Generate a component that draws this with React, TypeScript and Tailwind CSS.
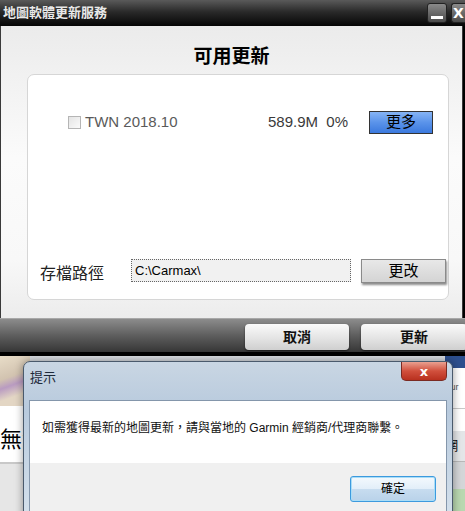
import React from "react";

const cjk = "font-['Liberation_Sans','Noto_Sans_CJK_TC',sans-serif]";

function BackgroundStrip() {
  return (
    <div className="flex h-[155px] w-full bg-[#d9dde2]">
      <div className="flex w-[30px] flex-col">
        <div className="h-[50px] bg-[linear-gradient(160deg,#e8ddc8_0%,#d2c3b0_40%,#b99bc1_55%,#e3d6c4_75%)]" />
        <div className={`flex h-[56px] items-center overflow-hidden whitespace-nowrap bg-white pt-[10px] text-[22px] text-black ${cjk}`}>無法</div>
        <div className="h-[2px] bg-[#c8c8c8]" />
        <div className="flex-1 bg-[#e6e6e6]" />
      </div>
      <div className="flex-1" />
      <div className="flex w-[20px] flex-col">
        <div className="h-[12px] bg-[#2d4f8e]" />
        <div className="flex h-[40px] items-center bg-white text-[9px] text-[#555] font-['Liberation_Sans',sans-serif]">Fur</div>
        <div className="h-[1px] bg-[#c8c8c8]" />
        <div className="h-[22px] bg-white" />
        <div className={`flex h-[30px] items-center overflow-hidden whitespace-nowrap bg-[#e4e6e8] text-[13px] ${cjk}`}>網</div>
        <div className="h-[1px] bg-[#b8b8b8]" />
        <div className="flex-1 bg-[#d4d6d8]" />
        <div className="h-[22px] bg-[#b9d8b0]" />
      </div>
    </div>
  );
}

function Dialog() {
  return (
    <div className="absolute left-[23px] top-[361px] flex h-[160px] w-[430px] flex-col rounded-t-[7px] border border-[#4a5a6c] bg-[linear-gradient(180deg,#c9d6e3_0%,#b8cadd_30%,#d5e1ec_100%)] px-[5px] shadow-[0_0_8px_rgba(0,0,0,0.4)]">
      <div className="flex h-[38px] items-start justify-between">
        <span className={`mt-[6px] pl-[1px] text-[13px] text-[#1e2a3a] ${cjk}`}>提示</span>
        <div className="flex h-[19px] w-[46px] items-center justify-center rounded-b-[5px] border border-t-0 border-[#7a2a22] bg-[linear-gradient(180deg,#e9a090_0%,#d1503d_50%,#b8301f_100%)] text-[13px] font-bold leading-none text-white font-['DejaVu_Sans',sans-serif]">
          x
        </div>
      </div>
      <div className="flex flex-1 flex-col border border-[#8496ab] bg-white">
        <div className={`flex h-[62px] items-start pl-[12px] pt-[18px] text-[12px] text-[#111] ${cjk}`}>
          如需獲得最新的地圖更新，請與當地的 Garmin 經銷商/代理商聯繫。
        </div>
        <div className="flex flex-1 justify-end bg-[#f0f0f0] pr-[10px] pt-[13px]">
          <div className={`flex h-[26px] w-[86px] items-center justify-center rounded-[3px] border border-[#3c9ade] bg-[linear-gradient(180deg,#f4f9fd_0%,#e2eef9_50%,#c7dcef_51%,#b9d2e9_100%)] shadow-[inset_0_0_0_1px_#a9ddf7] text-[12px] text-black ${cjk}`}>
            確定
          </div>
        </div>
      </div>
    </div>
  );
}

export default function App() {
  return (
    <div className="relative h-[511px] w-[465px] overflow-hidden bg-black">
      <div className="flex h-[356px] w-full flex-col bg-black">
        <div className="flex h-[26px] items-center justify-between bg-[linear-gradient(180deg,#5a5a5a_0%,#2a2a2a_45%,#050505_100%)] pl-[3px]">
          <span className={`text-[13px] font-bold text-[#e8e8e8] ${cjk}`}>地圖軟體更新服務</span>
          <div className="flex gap-[4px] self-start pt-[3px]">
            <div className="flex h-[20px] w-[20px] items-end justify-center rounded-[3px] border border-[#222] bg-[linear-gradient(180deg,#8a8a8a_0%,#4a4a4a_100%)] pb-[3px]">
              <div className="h-[3px] w-[12px] bg-white" />
            </div>
            <div className="flex h-[20px] w-[14px] items-center justify-start overflow-hidden rounded-l-[3px] border border-r-0 border-[#222] bg-[linear-gradient(180deg,#8a8a8a_0%,#4a4a4a_100%)] pl-[1px] text-[14px] font-bold leading-none text-white font-['DejaVu_Sans',sans-serif]">
              X
            </div>
          </div>
        </div>
        <div className="flex h-[292px] w-[463px] flex-col border-l border-r border-[#3a3a3a] bg-[linear-gradient(180deg,#ebebeb_0%,#fbfbfb_45%,#f8f8f8_80%,#ececec_100%)]">
          <div className={`flex h-[48px] items-center justify-center pt-[14px] text-[19px] font-bold text-black ${cjk}`}>可用更新</div>
          <div className="ml-[26px] flex h-[226px] w-[422px] flex-col rounded-[7px] border border-[#d6d6d6] bg-white">
            <div className="flex h-[88px] items-center pl-[40px] pt-[6px]">
              <div className="h-[13px] w-[13px] border border-[#b5b5b5] bg-[linear-gradient(135deg,#e4e4e4,#fafafa)]" />
              <span className="ml-[4px] w-[183px] text-[15px] text-[#5a5a5a] font-['Liberation_Sans',sans-serif]">TWN 2018.10</span>
              <span className="w-[101px] text-[15px] text-[#3a3a3a] font-['Liberation_Sans',sans-serif]">589.9M&nbsp;&nbsp;0%</span>
              <div className={`flex h-[23px] w-[64px] items-center justify-center border border-[#333] bg-[linear-gradient(180deg,#86b4f5_0%,#5a93ea_50%,#3b79de_100%)] text-[15px] text-black ${cjk}`}>更多</div>
            </div>
            <div className="flex-1" />
            <div className="flex h-[42px] items-start pl-[12px] pt-[2px]">
              <span className={`mt-[3px] w-[91px] text-[16px] text-[#222] ${cjk}`}>存檔路徑</span>
              <div className="flex h-[23px] w-[220px] items-center border border-dotted border-[#666] bg-[#f1f1f1] pl-[3px] text-[13px] text-black font-['Liberation_Sans',sans-serif]">C:\Carmax\</div>
              <div className={`ml-[10px] flex h-[24px] w-[85px] items-center justify-center border border-[#8a8a8a] bg-[linear-gradient(180deg,#e8e8e8_0%,#d4d4d4_100%)] shadow-[1px_2px_2px_rgba(0,0,0,0.45)] text-[15px] text-black ${cjk}`}>更改</div>
            </div>
          </div>
        </div>
        <div className="flex h-[34px] w-full items-center justify-end gap-[12px] border-t border-[#a8a8a8] bg-[linear-gradient(180deg,#8c8c8c_0%,#5e5e5e_50%,#363636_100%)] pt-[3px]">
          <div className={`flex h-[26px] w-[104px] items-center justify-center rounded-[4px] bg-[linear-gradient(180deg,#fafafa_0%,#e6e6e6_50%,#cfcfcf_100%)] shadow-[0_1px_2px_rgba(0,0,0,0.6)] text-[14px] font-bold text-[#111] ${cjk}`}>取消</div>
          <div className={`-mr-[2px] flex h-[26px] w-[106px] items-center justify-center rounded-[4px] bg-[linear-gradient(180deg,#fafafa_0%,#e6e6e6_50%,#cfcfcf_100%)] shadow-[0_1px_2px_rgba(0,0,0,0.6)] text-[14px] font-bold text-[#111] ${cjk}`}>更新</div>
        </div>
      </div>
      <BackgroundStrip />
      <Dialog />
    </div>
  );
}
